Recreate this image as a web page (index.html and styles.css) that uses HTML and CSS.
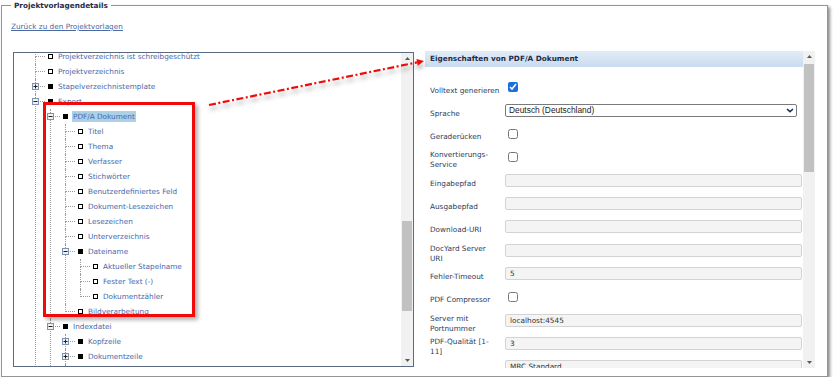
FILE: index.html
```html
<!DOCTYPE html>
<html lang="de">

<head>
    <meta charset="UTF-8">
    <title>Projektvorlagendetails</title>
    <link rel="stylesheet" href="styles.css">
</head>

<body>
    <fieldset class="details">
        <legend>Projektvorlagendetails</legend>
        <a class="back-link" href="#">Zurück zu den Projektvorlagen</a>

        <div class="split">
            <!-- Tree of the template -->
            <div class="tree-box">
                <div class="tree-view">
                    <ul class="tree">
                        <li><div class="node"><span class="icon"></span><span class="text">Projektverzeichnis ist schreibgeschützt</span></div></li>
                        <li><div class="node"><span class="icon"></span><span class="text">Projektverzeichnis</span></div></li>
                        <li>
                            <svg class="exp" width="7" height="7"><rect x="0.5" y="0.5" width="6" height="6"/><path d="M1.5 3.5h4M3.5 1.5v4"/></svg>
                            <div class="node"><span class="icon filled"></span><span class="text">Stapelverzeichnistemplate</span></div>
                        </li>
                        <li>
                            <svg class="exp" width="7" height="7"><rect x="0.5" y="0.5" width="6" height="6"/><path d="M1.5 3.5h4"/></svg>
                            <div class="node"><span class="icon filled"></span><span class="text">Export</span></div>
                            <ul>
                                <li>
                                    <svg class="exp" width="7" height="7"><rect x="0.5" y="0.5" width="6" height="6"/><path d="M1.5 3.5h4"/></svg>
                                    <div class="node"><span class="icon filled"></span><span class="text selected">PDF/A Dokument</span></div>
                                    <ul>
                                        <li><div class="node"><span class="icon"></span><span class="text">Titel</span></div></li>
                                        <li><div class="node"><span class="icon"></span><span class="text">Thema</span></div></li>
                                        <li><div class="node"><span class="icon"></span><span class="text">Verfasser</span></div></li>
                                        <li><div class="node"><span class="icon"></span><span class="text">Stichwörter</span></div></li>
                                        <li><div class="node"><span class="icon"></span><span class="text">Benutzerdefiniertes Feld</span></div></li>
                                        <li><div class="node"><span class="icon"></span><span class="text">Dokument-Lesezeichen</span></div></li>
                                        <li><div class="node"><span class="icon"></span><span class="text">Lesezeichen</span></div></li>
                                        <li><div class="node"><span class="icon"></span><span class="text">Unterverzeichnis</span></div></li>
                                        <li>
                                            <svg class="exp" width="7" height="7"><rect x="0.5" y="0.5" width="6" height="6"/><path d="M1.5 3.5h4"/></svg>
                                            <div class="node"><span class="icon filled"></span><span class="text">Dateiname</span></div>
                                            <ul>
                                                <li><div class="node"><span class="icon"></span><span class="text">Aktueller Stapelname</span></div></li>
                                                <li><div class="node"><span class="icon"></span><span class="text">Fester Text (-)</span></div></li>
                                                <li><div class="node"><span class="icon"></span><span class="text">Dokumentzähler</span></div></li>
                                            </ul>
                                        </li>
                                        <li><div class="node"><span class="icon"></span><span class="text">Bildverarbeitung</span></div></li>
                                    </ul>
                                </li>
                                <li>
                                    <svg class="exp" width="7" height="7"><rect x="0.5" y="0.5" width="6" height="6"/><path d="M1.5 3.5h4"/></svg>
                                    <div class="node"><span class="icon filled"></span><span class="text">Indexdatei</span></div>
                                    <ul>
                                        <li>
                                            <svg class="exp" width="7" height="7"><rect x="0.5" y="0.5" width="6" height="6"/><path d="M1.5 3.5h4M3.5 1.5v4"/></svg>
                                            <div class="node"><span class="icon filled"></span><span class="text">Kopfzeile</span></div>
                                        </li>
                                        <li>
                                            <svg class="exp" width="7" height="7"><rect x="0.5" y="0.5" width="6" height="6"/><path d="M1.5 3.5h4M3.5 1.5v4"/></svg>
                                            <div class="node"><span class="icon filled"></span><span class="text">Dokumentzeile</span></div>
                                        </li>
                                        <!-- rows below the visible area, kept for the guide lines -->
                                        <li>
                                            <svg class="exp" width="7" height="7"><rect x="0.5" y="0.5" width="6" height="6"/><path d="M1.5 3.5h4M3.5 1.5v4"/></svg>
                                            <div class="node"><span class="icon filled"></span></div>
                                        </li>
                                        <li><div class="node"><span class="icon"></span></div></li>
                                    </ul>
                                </li>
                                <li><div class="node"><span class="icon"></span></div></li>
                            </ul>
                        </li>
                        <li><div class="node"><span class="icon"></span></div></li>
                    </ul>
                </div>
                <div class="vscroll">
                    <div class="arrow"><svg width="5" height="3"><polygon points="0,3 2.5,0 5,3"/></svg></div>
                    <div class="track"><div class="thumb"></div></div>
                    <div class="arrow"><svg width="5" height="3"><polygon points="0,0 5,0 2.5,3"/></svg></div>
                </div>
            </div>

            <!-- Properties of the selected node -->
            <div class="props">
                <div class="props-view">
                    <div class="props-title">Eigenschaften von PDF/A Dokument</div>
                    <div class="prop-list">
                        <div class="prop-row">
                            <label class="prop-label">Volltext generieren</label>
                            <input type="checkbox" checked>
                        </div>
                        <div class="prop-row">
                            <label class="prop-label">Sprache</label>
                            <div class="select">
                                <span>Deutsch (Deutschland)</span>
                                <svg width="8" height="5"><path d="M1 1l3 2.6L7 1"/></svg>
                            </div>
                        </div>
                        <div class="prop-row">
                            <label class="prop-label">Geraderücken</label>
                            <input type="checkbox">
                        </div>
                        <div class="prop-row">
                            <label class="prop-label">Konvertierungs-<br>Service</label>
                            <input type="checkbox">
                        </div>
                        <div class="prop-row">
                            <label class="prop-label">Eingabepfad</label>
                            <input class="field" type="text" value="">
                        </div>
                        <div class="prop-row">
                            <label class="prop-label">Ausgabepfad</label>
                            <input class="field" type="text" value="">
                        </div>
                        <div class="prop-row">
                            <label class="prop-label">Download-URI</label>
                            <input class="field" type="text" value="">
                        </div>
                        <div class="prop-row">
                            <label class="prop-label">DocYard Server<br>URI</label>
                            <input class="field" type="text" value="">
                        </div>
                        <div class="prop-row">
                            <label class="prop-label">Fehler-Timeout</label>
                            <input class="field" type="text" value="5">
                        </div>
                        <div class="prop-row">
                            <label class="prop-label">PDF Compressor</label>
                            <input type="checkbox">
                        </div>
                        <div class="prop-row">
                            <label class="prop-label">Server mit<br>Portnummer</label>
                            <input class="field" type="text" value="localhost:4545">
                        </div>
                        <div class="prop-row">
                            <label class="prop-label">PDF-Qualität [1-<br>11]</label>
                            <input class="field" type="text" value="3">
                        </div>
                        <div class="prop-row">
                            <label class="prop-label"></label>
                            <input class="field" type="text" value="MRC Standard">
                        </div>
                    </div>
                </div>
                <div class="vscroll">
                    <div class="arrow"><svg width="5" height="3"><polygon points="0,3 2.5,0 5,3"/></svg></div>
                    <div class="track"><div class="thumb"></div></div>
                    <div class="arrow"><svg width="5" height="3"><polygon points="0,0 5,0 2.5,3"/></svg></div>
                </div>
            </div>
        </div>
    </fieldset>

    <!-- Annotation: callout box and arrow -->
    <div class="callout"></div>
    <svg class="callout-arrow" width="835" height="387">
        <line x1="209" y1="105" x2="417" y2="62.4" />
        <polygon points="424,61 417.8,65.8 416.4,59" />
    </svg>
</body>

</html>
```

FILE: styles.css
```css
body {
    margin: 0;
    position: relative;
    font-family: "DejaVu Sans", Verdana, sans-serif;
    font-size: 7.3px;
    color: #2d3d5a;
    background: #ffffff;
}

.details {
    box-sizing: border-box;
    width: 827px;
    height: 377px;
    margin: 0 0 0 1px;
    padding: 0 12px 0 9px;
    border: 1px solid #949494;
    box-shadow: 2px 2px 3px rgba(0, 0, 0, 0.45);
}

.details legend {
    padding: 0 3px;
    line-height: 11px;
    font-weight: bold;
    color: #1d2b4b;
}

.back-link {
    display: block;
    width: max-content;
    margin-top: 10px;
    line-height: 11px;
    color: #4a6aa6;
}

.split {
    display: flex;
    align-items: flex-start;
    gap: 11px;
    margin: 19px 0 0 2px;
}

/* Tree */
.tree-box {
    box-sizing: border-box;
    display: flex;
    width: 401px;
    height: 315px;
    margin-top: 1px;
    border: 1px solid #5b6a80;
}

.tree-view {
    flex: 1;
    overflow: hidden;
}

.tree,
.tree ul {
    list-style: none;
    margin: 0;
    padding: 0;
}

.tree {
    margin-top: -4.5px;
    padding-left: 21px;
}

.tree ul {
    margin-left: 2px;
}

.tree li {
    position: relative;
    padding-left: 13px;
}

.tree li::before {
    content: "";
    position: absolute;
    left: 0;
    top: 0;
    width: 9px;
    height: 7px;
    border-left: 1px dotted #9a9a9a;
    border-bottom: 1px dotted #9a9a9a;
}

.tree li::after {
    content: "";
    position: absolute;
    left: 0;
    top: 7px;
    bottom: 0;
    border-left: 1px dotted #9a9a9a;
}

.tree li:last-child::after {
    display: none;
}

.exp {
    position: absolute;
    left: -3px;
    top: 4px;
    z-index: 1;
}

.exp rect {
    fill: #eef2f7;
    stroke: #8093ae;
}

.exp path {
    stroke: #1e1e1e;
}

.node {
    display: flex;
    align-items: center;
    height: 15px;
    white-space: nowrap;
}

.icon {
    box-sizing: border-box;
    width: 5px;
    height: 5px;
    margin-right: 5px;
    border: 1px solid #000;
    background: #fff;
}

.icon.filled {
    background: #000;
}

.text {
    color: #4769ad;
}

.text.selected {
    margin-left: -1px;
    padding: 1px;
    background: #acd0e6;
}

/* Scrollbars */
.vscroll {
    display: flex;
    flex-direction: column;
    width: 12px;
    background: #f1f1f1;
}

.vscroll .arrow {
    display: flex;
    justify-content: center;
    align-items: center;
    height: 11px;
}

.vscroll .arrow svg {
    fill: #5a5a5a;
}

.vscroll .track {
    flex: 1;
}

.vscroll .thumb {
    margin: 0 1px;
    background: #c1c1c1;
}

.tree-box .thumb {
    margin-top: 157px;
    height: 90px;
}

.props .thumb {
    margin-top: 2px;
    height: 108px;
}

/* Properties */
.props {
    display: flex;
    width: 390px;
    height: 317px;
}

.props-view {
    flex: 1;
    overflow: hidden;
}

.props-title {
    height: 16px;
    padding-left: 5px;
    line-height: 16px;
    font-weight: bold;
    color: #1d2b4b;
    background: linear-gradient(#e2ecf7, #c9dbee);
}

.prop-list {
    padding: 8.4px 0 0 5px;
}

.prop-row {
    display: flex;
    align-items: center;
    height: 23.3px;
}

.prop-label {
    flex: none;
    width: 75px;
    padding-top: 7px;
    line-height: 10px;
    color: #2d3d5a;
}

.prop-row input[type="checkbox"] {
    width: 10px;
    height: 10px;
    margin: 0 0 0 3px;
    accent-color: #1a6fdc;
}

.field {
    box-sizing: border-box;
    width: 297px;
    height: 13px;
    margin: 0;
    padding: 0 4px;
    border: 1px solid #d3d3d3;
    border-radius: 2px;
    background: #f4f4f4;
    font-family: "DejaVu Sans", Verdana, sans-serif;
    font-size: 7.3px;
    color: #333;
}

.select {
    box-sizing: border-box;
    display: flex;
    justify-content: space-between;
    align-items: center;
    width: 292px;
    height: 13px;
    padding: 0 2px 0 3px;
    border: 1px solid #7a7a7a;
    border-radius: 2px;
    font-family: "Liberation Sans", Arial, sans-serif;
    font-size: 8.4px;
    color: #222;
}

.select path {
    fill: none;
    stroke: #1b2d5b;
    stroke-width: 1.6;
}

/* Annotation */
.callout {
    position: absolute;
    left: 43px;
    top: 102px;
    box-sizing: border-box;
    width: 152px;
    height: 215px;
    border: 3px solid #f00a0a;
    box-shadow: 3px 3px 4px rgba(0, 0, 0, 0.3);
}

.callout-arrow {
    position: absolute;
    left: 0;
    top: 0;
    pointer-events: none;
    filter: drop-shadow(1px 4px 2px rgba(0, 0, 0, 0.3));
}

.callout-arrow line {
    stroke: #f00a0a;
    stroke-width: 2.2;
    stroke-dasharray: 7 2.5 2 2.5;
}

.callout-arrow polygon {
    fill: #f00a0a;
}
```
